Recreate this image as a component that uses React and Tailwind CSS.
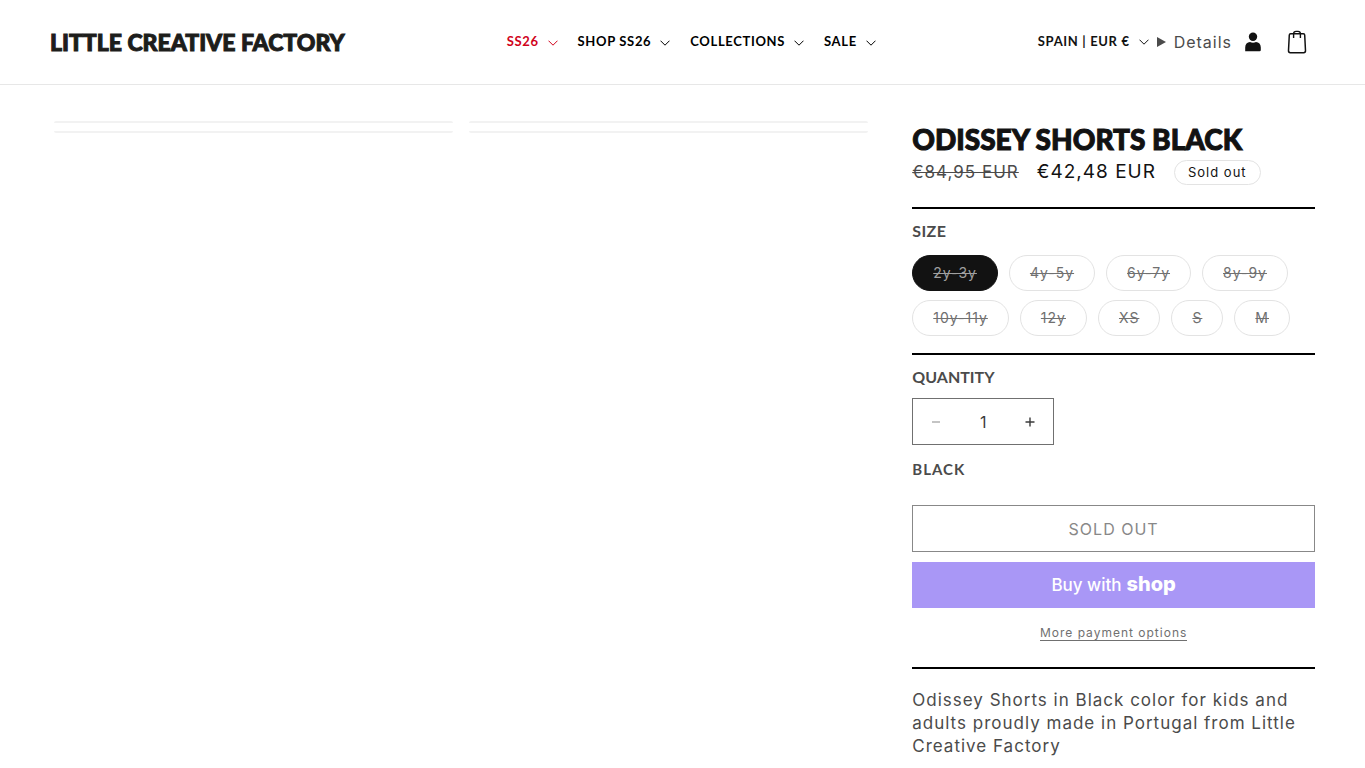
import { useState } from 'react'

const NAV_ITEMS = [
  { label: 'SS26', highlight: true },
  { label: 'SHOP SS26' },
  { label: 'COLLECTIONS' },
  { label: 'SALE' },
]

const SIZES = ['2y-3y', '4y-5y', '6y-7y', '8y-9y', '10y-11y', '12y', 'XS', 'S', 'M']

function Caret() {
  return (
    <svg viewBox="0 0 10 6" className="h-[6px] w-[10px]" fill="none" stroke="currentColor" aria-hidden="true">
      <path d="M0.5 0.7 L5 5.2 L9.5 0.7" strokeWidth="1" />
    </svg>
  )
}

function AccountIcon() {
  return (
    <svg viewBox="0 0 18 20" className="h-5 w-[18px]" fill="currentColor" aria-hidden="true">
      <circle cx="9" cy="4.7" r="4.2" />
      <path d="M1.2 19.2 V15.5 C1.2 12.2 3.2 10.2 6 10 C7.8 11 10.2 11 12 10 C14.8 10.2 16.8 12.2 16.8 15.5 V18 Q16.8 19.2 15.6 19.2 Z" />
    </svg>
  )
}

function BagIcon() {
  return (
    <svg viewBox="0 0 20 24" className="h-6 w-5" fill="none" stroke="currentColor" strokeWidth="1.5" aria-hidden="true">
      <path
        d="M3.6 3.8 H16.4 Q17.6 3.8 17.7 5 L18.5 20.8 Q18.5 22.7 16.7 22.7 H3.3 Q1.5 22.7 1.5 20.8 L2.3 5 Q2.4 3.8 3.6 3.8 Z"
        strokeLinejoin="round"
      />
      <path d="M6.6 8 V3.8 Q6.6 1.4 9 1.4 H11 Q13.4 1.4 13.4 3.8 V8" strokeWidth="1.4" />
    </svg>
  )
}

function Header() {
  return (
    <header className="border-b border-[#e7e7e7]">
      <div className="flex h-[84px] items-center justify-between px-[50px]">
        <a
          href="#"
          className="font-[Lato,sans-serif] text-[23px] font-black text-[#1d1d1b] [-webkit-text-stroke:1px_#1d1d1b]"
        >
          LITTLE CREATIVE FACTORY
        </a>

        <nav className="flex items-center gap-5 font-[Lato,sans-serif] text-[13px] font-bold tracking-wider">
          {NAV_ITEMS.map((item) => (
            <button
              key={item.label}
              type="button"
              className={`flex items-center gap-[9px] ${item.highlight ? 'text-[#d0021b]' : 'text-black'}`}
            >
              {item.label}
              <span className="pt-[2px]">
                <Caret />
              </span>
            </button>
          ))}
        </nav>

        <div className="flex items-center pr-2 text-[#121212]">
          <button
            type="button"
            className="flex items-center gap-[9px] font-[Lato,sans-serif] text-[13px] font-bold tracking-wider"
          >
            SPAIN | EUR €
            <Caret />
          </button>
          <details className="ml-2 text-[#4b4b4b]">
            <summary className="flex list-none items-center gap-2 text-base tracking-[1px]">
              <svg viewBox="0 0 9 10" className="h-[10px] w-[9px]" fill="currentColor" aria-hidden="true">
                <path d="M0 0 L9 5 L0 10 Z" />
              </svg>
              Details
            </summary>
          </details>
          <a href="#" aria-label="Log in" className="ml-3">
            <AccountIcon />
          </a>
          <a href="#" aria-label="Cart" className="ml-[25px]">
            <BagIcon />
          </a>
        </div>
      </div>
    </header>
  )
}

function Gallery() {
  return (
    <ul className="grid grid-cols-2 gap-4 px-1">
      <li className="h-3 rounded-xs border-y-2 border-[#f2f2f2]" />
      <li className="h-3 rounded-xs border-y-2 border-[#f2f2f2]" />
    </ul>
  )
}

function SizePicker({ value, onChange }) {
  return (
    <div role="radiogroup" aria-labelledby="size-label" className="border-t-2 border-black pt-[10px]">
      <p id="size-label" className="font-[Lato,sans-serif] text-base leading-6 font-bold tracking-wide text-[#4b4b4b]">
        SIZE
      </p>
      <div className="mt-3 flex flex-wrap gap-x-[11px] gap-y-[9px]">
        {SIZES.map((size) => (
          <label
            key={size}
            className="relative flex h-9 cursor-pointer items-center rounded-full border border-[#e3e3e3] px-5 text-sm tracking-[1px] text-[#707070] line-through has-checked:border-[#121212] has-checked:bg-[#121212] has-checked:text-[#a0a0a0]"
          >
            <input
              type="radio"
              name="size"
              value={size}
              checked={value === size}
              onChange={() => onChange(size)}
              className="absolute inset-0 cursor-pointer opacity-0"
            />
            {size}
          </label>
        ))}
      </div>
    </div>
  )
}

function QuantityPicker({ value, onChange }) {
  return (
    <div className="mt-[17px] border-t-2 border-black pt-[10px]">
      <label htmlFor="quantity" className="block font-[Lato,sans-serif] text-base leading-6 font-bold text-[#4b4b4b]">
        QUANTITY
      </label>
      <div className="mt-[9px] flex h-[47px] w-[142px] border border-[#707070] text-[#3b3b3b]">
        <button
          type="button"
          aria-label="Decrease quantity"
          disabled={value <= 1}
          onClick={() => onChange(value - 1)}
          className="flex w-[46px] items-center justify-center disabled:opacity-50"
        >
          <svg viewBox="0 0 10 10" className="size-[10px]" stroke="currentColor" aria-hidden="true">
            <path d="M1 5 H9" strokeWidth="1.2" />
          </svg>
        </button>
        <input
          id="quantity"
          type="text"
          inputMode="numeric"
          value={value}
          onChange={(e) => onChange(Number(e.target.value) || 1)}
          className="w-0 flex-1 text-center text-base outline-none"
        />
        <button
          type="button"
          aria-label="Increase quantity"
          onClick={() => onChange(value + 1)}
          className="flex w-[46px] items-center justify-center"
        >
          <svg viewBox="0 0 10 10" className="size-[10px]" stroke="currentColor" aria-hidden="true">
            <path d="M0.5 5 H9.5 M5 0.5 V9.5" strokeWidth="1.4" />
          </svg>
        </button>
      </div>
    </div>
  )
}

function ProductInfo() {
  const [size, setSize] = useState('2y-3y')
  const [quantity, setQuantity] = useState(1)

  return (
    <section>
      <h1 className="font-[Lato,sans-serif] text-[28px] leading-9 font-black text-[#121212] [-webkit-text-stroke:1px_#121212]">
        ODISSEY SHORTS BLACK
      </h1>

      <div className="mt-[3px] mb-[22px] flex h-[25px] items-center gap-[18px]">
        <s className="text-[17px] tracking-[1px] text-[#4b4b4b]">€84,95 EUR</s>
        <span className="text-[19px] tracking-[1px] text-[#121212]">€42,48 EUR</span>
        <span className="rounded-full border border-[#e3e3e3] px-[13px] text-[13px] leading-[23px] tracking-[1px] text-[#121212]">
          Sold out
        </span>
      </div>

      <SizePicker value={size} onChange={setSize} />
      <QuantityPicker value={quantity} onChange={setQuantity} />

      <p className="mt-3 font-[Lato,sans-serif] text-[15px] leading-6 font-bold tracking-[1px] text-[#4b4b4b]">BLACK</p>

      <button
        type="button"
        disabled
        className="mt-6 block h-[47px] w-full border border-[#888888] text-base tracking-[1px] text-[#888888]"
      >
        SOLD OUT
      </button>
      <button
        type="button"
        className="mt-[10px] flex h-[46px] w-full items-baseline justify-center gap-[5px] bg-[#a997f6] text-white"
      >
        <span className="text-[17px] leading-[46px] font-medium">Buy with</span>
        <span className="text-[20px] font-extrabold">shop</span>
      </button>
      <div className="mt-[15px] text-center leading-4">
        <a href="#" className="border-b border-[#707070] text-xs tracking-[1px] text-[#707070]">
          More payment options
        </a>
      </div>

      <p className="mt-[26px] border-t-2 border-black pt-5 text-[17px] leading-[23px] tracking-[1px] text-[#4b4b4b]">
        Odissey Shorts in Black color for kids and adults proudly made in Portugal from Little Creative Factory
      </p>
    </section>
  )
}

export default function App() {
  return (
    <div className="min-h-screen bg-white font-[Inter,sans-serif]">
      <Header />
      <main className="flex px-[50px] pt-9">
        <div className="w-[65%]">
          <Gallery />
        </div>
        <div className="min-w-0 flex-1 pl-10">
          <ProductInfo />
        </div>
      </main>
    </div>
  )
}
